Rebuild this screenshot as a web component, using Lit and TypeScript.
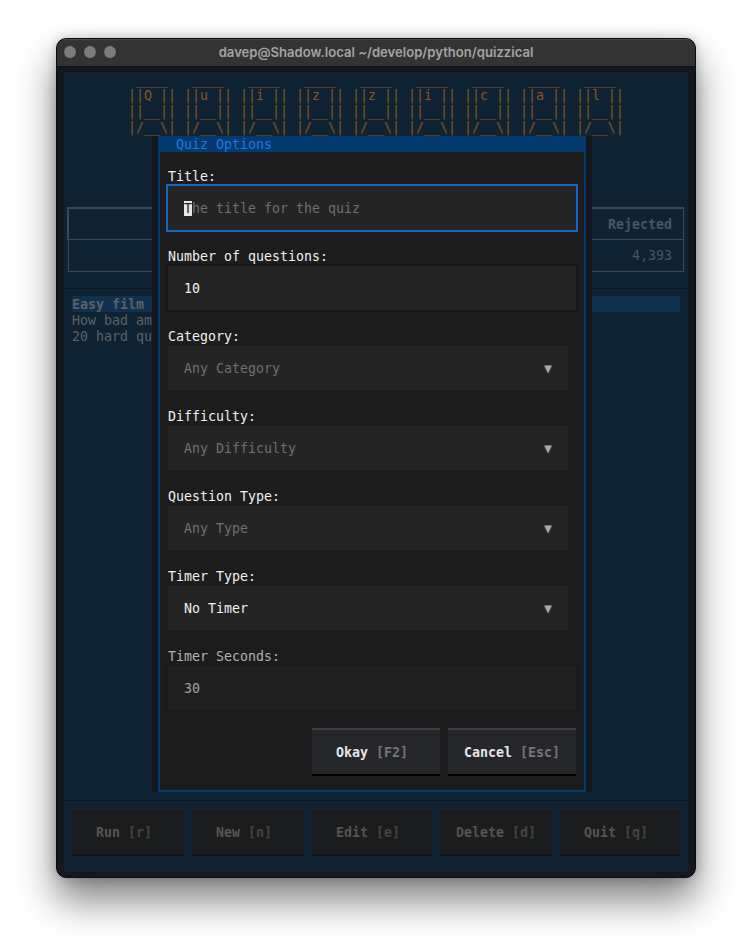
import { LitElement, html, css } from "lit";
import { customElement } from "lit/decorators.js";

const LETTERS = ["Q", "u", "i", "z", "z", "i", "c", "a", "l"];
const ascii = [
  LETTERS.map(() => " ____ ").join(" "),
  LETTERS.map((l) => `||${l} ||`).join(" "),
  LETTERS.map(() => "||__||").join(" "),
  LETTERS.map(() => "|/__\\|").join(" "),
];

const FOOT = [
  ["Run", "[r]", 112],
  ["New", "[n]", 112],
  ["Edit", "[e]", 120],
  ["Delete", "[d]", 112],
  ["Quit", "[q]", 120],
] as const;

/* Text is centred on whole terminal cells of 8px, rounding down. */
const cellPad = (name: string, key: string, w: number) =>
  Math.floor((w / 8 - (name.length + key.length + 1)) / 2) * 8;

@customElement("app-root")
export class AppRoot extends LitElement {
  static styles = css`
    :host {
      display: block;
      width: 752px;
      height: 952px;
      box-sizing: border-box;
      padding: 38px 56px 74px;
      background: #fff;
      font-family: "DejaVu Sans Mono", monospace;
      font-size: 13.29px;
      line-height: 18px;
    }
    * { box-sizing: border-box; }
    .shadow {
      height: 840px;
      border-radius: 10px;
      box-shadow: 0 22px 38px rgba(0, 0, 0, 0.5), 0 0 12px rgba(0, 0, 0, 0.22);
    }
    .window {
      height: 840px;
      display: flex;
      flex-direction: column;
      border-radius: 10px;
      overflow: hidden;
      background: #12181e;
      border: 1px solid #0c0c0c;
    }
    .titlebar {
      height: 28px;
      flex: none;
      display: flex;
      align-items: center;
      justify-content: center;
      position: relative;
      padding-bottom: 3px;
      background: #333333;
      border-top: 1px solid #4d4d4d;
      border-bottom: 1px solid #101010;
      color: #a3a3a3;
      font: 600 13.1px Inter, "Liberation Sans", sans-serif;
    }
    .lights {
      position: absolute;
      left: 7px;
      top: 6px;
      display: flex;
      gap: 8px;
    }
    .lights i {
      width: 12px;
      height: 12px;
      border-radius: 50%;
      background: #7b7b7b;
    }
    .term {
      flex: 1;
      padding: 5px 7px;
      display: flex;
      min-height: 0;
    }
    .app {
      flex: 1;
      position: relative;
      display: flex;
      flex-direction: column;
      background: #0f2231;
      height: 800px;
    }
    .logo {
      height: 64px;
      flex: none;
      text-align: center;
      color: #8a5722;
      white-space: pre;
      line-height: 15px;
    }
    .logo div { height: 16px; }
    .stats {
      flex: none;
      margin: 71px 4px 16px;
      height: 65px;
      color: #4a5663;
    }
    .stats .head {
      height: 33px;
      border: 2px solid #3e4a57;
      border-right-width: 1px;
      border-bottom-width: 1px;
      margin-left: -1px;
      padding: 7px 11px 0 0;
      text-align: right;
      font-weight: 700;
    }
    .stats .row {
      height: 32px;
      border: 1px solid #3e4a57;
      border-top: 0;
      padding: 7px 11px 0 0;
      text-align: right;
    }
    .list {
      flex: 1;
      border-top: 1px solid #0b1722;
      padding: 7px 8px 0;
      color: #5e6164;
      white-space: nowrap;
    }
    .list div { height: 16px; }
    .list .sel {
      background: #10304f;
      font-weight: 700;
    }
    .foot {
      flex: none;
      height: 72px;
      border-top: 1px solid #0b1722;
      padding: 7px 8px 0;
      display: flex;
      gap: 8px;
    }
    .fbtn {
      height: 48px;
      padding-top: 14px;
      background: #1b1c1e;
      border-top: 2px solid #202326;
      border-bottom: 2px solid #0e1318;
      font-weight: 700;
      color: #555;
      white-space: pre;
    }
    .fbtn span { color: #444; }
    .dialog {
      position: absolute;
      left: 88px;
      top: 64px;
      width: 440px;
      height: 656px;
      padding: 0 6px;
      background: #12181e;
      display: flex;
    }
    .pane {
      flex: 1;
      display: flex;
      flex-direction: column;
      background: #1c1c1c;
      border: 2px solid #053a6e;
      border-top: 0;
    }
    .dtitle {
      height: 16px;
      flex: none;
      margin: 0 -2px;
      padding-left: 18px;
      background: #053a6e;
      color: #1f78e0;
    }
    .form {
      flex: 1;
      padding: 16px 6px 0;
    }
    .label {
      height: 16px;
      padding-left: 2px;
      color: #f0f0f0;
    }
    .field { padding-bottom: 16px; }
    .input {
      height: 48px;
      width: 412px;
      padding: 14px 16px;
      background: #242424;
      border: 2px solid #161616;
      color: #f0f0f0;
      white-space: pre;
    }
    .input.focus {
      border-color: #1565c0;
      color: #707070;
    }
    .cursor {
      background: #e6e6e6;
      color: #1c1c1c;
    }
    .select {
      height: 44px;
      width: 400px;
      margin: 2px 0 2px 2px;
      padding: 14px 16px;
      display: flex;
      justify-content: space-between;
      background: #242424;
      color: #707070;
    }
    .arrow { color: #a8a8a8; }
    .select.on { color: #f0f0f0; }
    .dim .label { color: #b0b0b0; }
    .dim .input {
      color: #a0a0a0;
      background: #202020;
      border-color: #1a1a1a;
    }
    .actions {
      display: flex;
      justify-content: flex-end;
      gap: 8px;
      padding-right: 2px;
    }
    .btn {
      width: 128px;
      height: 48px;
      padding-top: 14px;
      background: #24262a;
      border-top: 2px solid #3c3f42;
      border-bottom: 2px solid #000;
      color: #e6e6e6;
      font-weight: 700;
      white-space: pre;
    }
    .btn span { color: #777; }
  `;

  private select(label: string, value: string, on = false) {
    return html`<div class="field">
      <div class="label">${label}</div>
      <div class="select ${on ? "on" : ""}">
        <span>${value}</span><span class="arrow">▼</span>
      </div>
    </div>`;
  }

  private button(name: string, key: string) {
    return html`<div class="btn" style="padding-left:${cellPad(name, key, 128)}px">${name} <span>${key}</span></div>`;
  }

  render() {
    return html`<div class="shadow">
      <div class="window">
        <div class="titlebar">
          <div class="lights"><i></i><i></i><i></i></div>
          davep@Shadow.local ~/develop/python/quizzical
        </div>
        <div class="term">
          <div class="app">
            <div class="logo">${ascii.map((l) => html`<div>${l}</div>`)}</div>
            <div class="stats">
              <div class="head">Rejected</div>
              <div class="row">4,393</div>
            </div>
            <div class="list">
              <div class="sel">Easy film</div>
              <div>How bad am</div>
              <div>20 hard qu</div>
            </div>
            <div class="foot">
              ${FOOT.map(
                ([name, key, w]) =>
                  html`<div class="fbtn" style="width:${w}px;padding-left:${cellPad(name, key, w)}px">${name} <span>${key}</span></div>`
              )}
            </div>
            <div class="dialog">
              <div class="pane">
                <div class="dtitle">Quiz Options</div>
                <div class="form">
                  <div class="field">
                    <div class="label">Title:</div>
                    <div class="input focus"><span class="cursor">T</span>he title for the quiz</div>
                  </div>
                  <div class="field">
                    <div class="label">Number of questions:</div>
                    <div class="input">10</div>
                  </div>
                  ${this.select("Category:", "Any Category")}
                  ${this.select("Difficulty:", "Any Difficulty")}
                  ${this.select("Question Type:", "Any Type")}
                  ${this.select("Timer Type:", "No Timer", true)}
                  <div class="field dim">
                    <div class="label">Timer Seconds:</div>
                    <div class="input">30</div>
                  </div>
                  <div class="actions">
                    ${this.button("Okay", "[F2]")}
                    ${this.button("Cancel", "[Esc]")}
                  </div>
                </div>
              </div>
            </div>
          </div>
        </div>
      </div>
    </div>`;
  }
}
